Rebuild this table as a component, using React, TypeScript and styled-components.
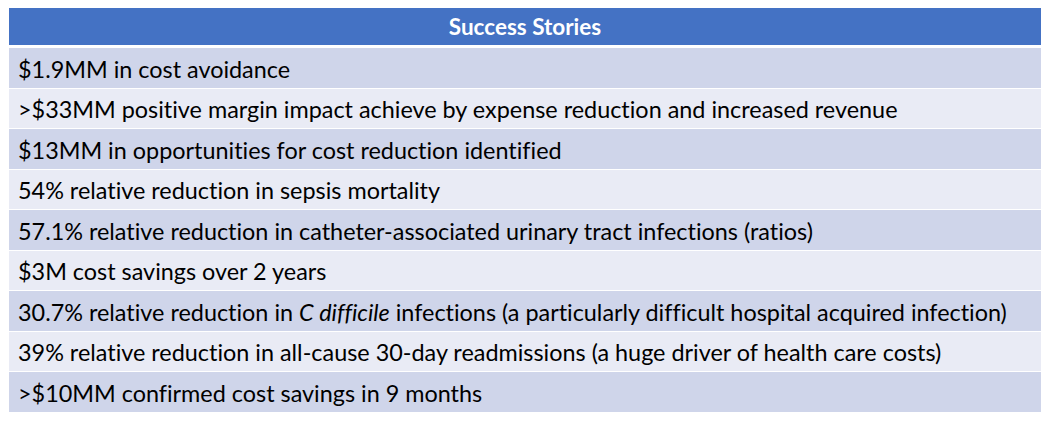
import styled, { createGlobalStyle } from 'styled-components';

const GlobalStyle = createGlobalStyle`
  html, body {
    margin: 0;
    background: #fff;
  }
`;

const rows: React.ReactNode[] = [
  '$1.9MM in cost avoidance',
  '>$33MM positive margin impact achieve by expense reduction and increased revenue',
  '$13MM in opportunities for cost reduction identified',
  '54% relative reduction in sepsis mortality',
  '57.1% relative reduction in catheter-associated urinary tract infections (ratios)',
  '$3M cost savings over 2 years',
  <>
    30.7% relative reduction in <em>C difficile</em> infections (a particularly difficult hospital acquired infection)
  </>,
  '39% relative reduction in all-cause 30-day readmissions (a huge driver of health care costs)',
  '>$10MM confirmed cost savings in 9 months',
];

function App() {
  return (
    <Page>
      <GlobalStyle />
      <Table>
        <Header>Success Stories</Header>
        {rows.map((text, i) => (
          <Row key={i} $alt={i % 2 === 1}>
            <span>{text}</span>
          </Row>
        ))}
      </Table>
    </Page>
  );
}

export default App;

const Page = styled.div`
  padding: 8px 9px;
  width: 1050px;
  height: 424px;
  box-sizing: border-box;
`;

const Table = styled.div`
  width: 1032px;
  display: flex;
  flex-direction: column;
  gap: 1px;
  font-family: Lato, 'Liberation Sans', sans-serif;
  font-variant-ligatures: none;
`;

const Header = styled.div`
  height: 37px;
  margin-bottom: 2px;
  background: #4472c4;
  color: #fff;
  font-weight: 700;
  font-size: 22.5px;
  display: flex;
  align-items: center;
  justify-content: center;
`;

const Row = styled.div<{ $alt: boolean }>`
  height: 39.5px;
  padding-left: 9px;
  display: flex;
  align-items: center;
  background: ${(p) => (p.$alt ? '#e9ebf5' : '#cfd5ea')};
  color: #000;
  font-size: 23.4px;
  white-space: nowrap;

  span {
    padding-top: 2px;
  }

  em {
    font-style: italic;
  }
`;
